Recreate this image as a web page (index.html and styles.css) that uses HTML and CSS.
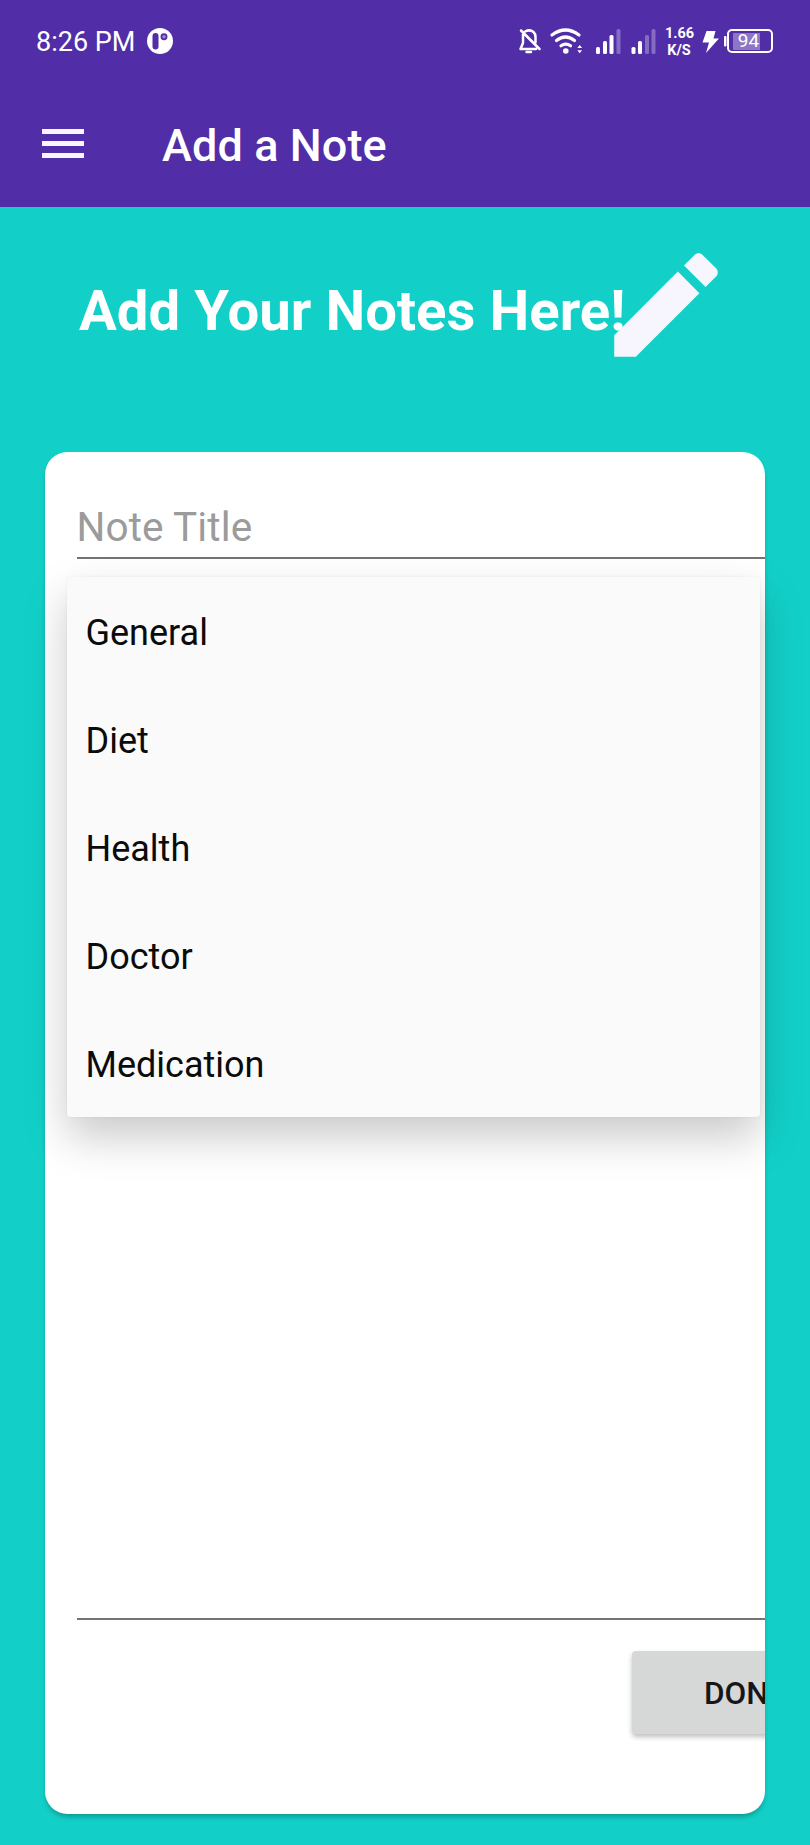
FILE: index.html
```
<!DOCTYPE html>
<html lang="en">
<head>
<meta charset="utf-8">
<title>Add a Note</title>
<link rel="stylesheet" href="styles.css">
</head>
<body>
<div class="screen">
  <header class="header">
    <div class="status">
      <span class="clock">8:26 PM</span>
      <svg class="app-badge" width="26" height="26" viewBox="0 0 26 26"><circle cx="13" cy="13" r="13" fill="#fff"/><rect x="5.500" y="5" width="6" height="16.500" rx="3" fill="#512da8"/><circle cx="17" cy="8.700" r="2.600" fill="#9c8ad0" stroke="#512da8" stroke-width="1.700"/></svg>
      <svg class="indicators" width="245" height="36" viewBox="515 22 245 36" fill="none">
        <g stroke="#fff" stroke-width="2.500" stroke-linejoin="round" stroke-linecap="round">
          <path d="M523 33v9l-2.500 6h15.500M525 30.500q5-2.500 8.500.5 2 2 2 5v5.500M521 29.500l18.500 18.500"/>
          <path d="M526.500 51h4.500" stroke-width="2.400"/>
        </g>
        <g stroke="#fff" stroke-width="3.200" stroke-linecap="round">
          <path d="M552 34q13.500-10 27 0M556.500 39.500q9-7 18 0M561 44.800q4.800-3.300 9.500 0"/>
        </g>
        <circle cx="565.800" cy="50" r="2.800" fill="#fff"/>
        <path d="M577.300 47l2.400-3 2.400 3zM577.300 49.200h4.800l-2.400 3z" fill="#fff"/>
        <g fill="#fff">
          <rect x="596" y="46" width="4" height="7" rx="1.500"/><rect x="603" y="40" width="4" height="13" rx="1.500"/><rect x="609.500" y="34" width="4" height="19" rx="1.500"/><rect x="616.500" y="28" width="4" height="25" rx="1.500" opacity=".3"/>
          <rect x="631.500" y="46" width="4" height="7" rx="1.500"/><rect x="638" y="40" width="4" height="13" rx="1.500"/><rect x="645" y="34" width="4" height="19" rx="1.500" opacity=".3"/><rect x="651.500" y="28" width="4" height="25" rx="1.500" opacity=".3"/>
          <path d="M706.500 30h9l-2 7.500h5.500l-13 14.500 3-10.500h-6.500z"/>
          <path d="M726 35.500h-1.500v9.500h1.500z" stroke="#fff" stroke-width="1"/>
          <rect x="733" y="32" width="36" height="17" rx="1" opacity=".35"/>
        </g>
        <text class="net" x="679.500" y="37" text-anchor="middle">1.66</text>
        <text class="net" x="679" y="54" text-anchor="middle">K/S</text>
      </svg>
      <span class="battery"><span class="battery-level">94</span></span>
    </div>
    <div class="toolbar">
      <svg width="42" height="29" viewBox="0 0 42 29" fill="#f7f5fd"><path d="M0 0h42v5H0zM0 12h42v5H0zM0 24h42v5H0z"/></svg>
      <h1 class="title">Add a Note</h1>
    </div>
  </header>
  <main class="content">
    <div class="hero">
      <h2 class="hero-text">Add Your Notes Here!</h2>
      <svg class="pencil" width="138" height="138" viewBox="0 0 24 24"><path fill="#f7f5fd" d="M3 17.250V21h3.750L17.810 9.940l-3.750-3.750L3 17.250zM20.710 7.040c.390-.390.390-1.020 0-1.410l-2.340-2.340c-.390-.390-1.020-.390-1.410 0l-1.830 1.830 3.750 3.750 1.830-1.830z"/></svg>
    </div>
    <div class="card-wrap">
      <section class="card">
        <div class="field">Note Title</div>
        <div class="note-body"></div>
        <div class="done">DONE</div>
      </section>
      <ul class="menu">
        <li>General</li>
        <li>Diet</li>
        <li>Health</li>
        <li>Doctor</li>
        <li>Medication</li>
      </ul>
    </div>
  </main>
</div>
</body>
</html>
```
FILE: styles.css
```
* { box-sizing: border-box; }
body { margin: 0; font-family: Roboto, sans-serif; }
h1, h2, ul { margin: 0; padding: 0; }
.screen { width: 810px; height: 1845px; overflow: hidden; display: flex; flex-direction: column; background: #12d0c8; }
.header { height: 207px; background: #512da8; color: #fff; }
.status { height: 81px; padding-left: 36px; display: flex; align-items: center; }
.clock { width: 111px; padding-top: 2px; font-size: 27px; white-space: nowrap; }
.app-badge { flex: none; }
.indicators { flex: none; margin-left: 342px; margin-right: -33px; }
.net { font-size: 14.500px; font-weight: 700; fill: #fff; }
.battery { width: 46px; height: 24px; padding-right: 3px; border: 2px solid #fff; border-radius: 5px; display: flex; align-items: center; justify-content: center; flex: none; }
.battery-level { font-size: 19px; line-height: 20px; }
.toolbar { height: 126px; padding: 0 0 0 42px; display: flex; align-items: center; }
.toolbar svg { margin-bottom: 2px; }
.title { margin-left: 78px; padding-top: 4px; font-size: 45px; font-weight: 500; line-height: 54px; letter-spacing: .1px; white-space: nowrap; }
.hero { height: 245px; padding: 28px 0 0 79px; display: flex; align-items: flex-start; color: #fff; }
.hero-text { width: 518px; padding-top: 43px; font-size: 56.250px; line-height: 66px; letter-spacing: .05px; font-weight: 700; white-space: nowrap; }
.pencil { flex: none; margin-top: .7px; }
.card-wrap { position: relative; margin: 0 45px; }
.card { height: 1362px; padding: 45px 0 0 31.500px; overflow: hidden; border-radius: 22.500px; background: #fff; box-shadow: 0 4px 5px -1px rgba(0,0,0,.25); }
.field { height: 62px; border-bottom: 2px solid #757373; font-size: 40.500px; line-height: 60px; letter-spacing: .12px; color: #9b9b9b; }
.note-body { height: 1061px; border-bottom: 2px solid #757373; }
.done { width: 198px; height: 83px; margin: 31px 0 0 555.500px; padding-left: 72px; border-radius: 4px; background: #d6d7d7; box-shadow: 0 3px 5px rgba(0,0,0,.25); font-size: 31.500px; font-weight: 500; line-height: 86px; color: #161616; }
.menu { position: absolute; left: 22px; top: 125px; width: 693px; height: 540px; border-radius: 4px; background: #fafafa; box-shadow: 0 20px 44px rgba(0,0,0,.21), 0 0 3px rgba(0,0,0,.06); list-style: none; }
.menu li { height: 108px; padding-left: 18.500px; font-size: 36px; line-height: 112px; color: #0b0b0b; }
```
